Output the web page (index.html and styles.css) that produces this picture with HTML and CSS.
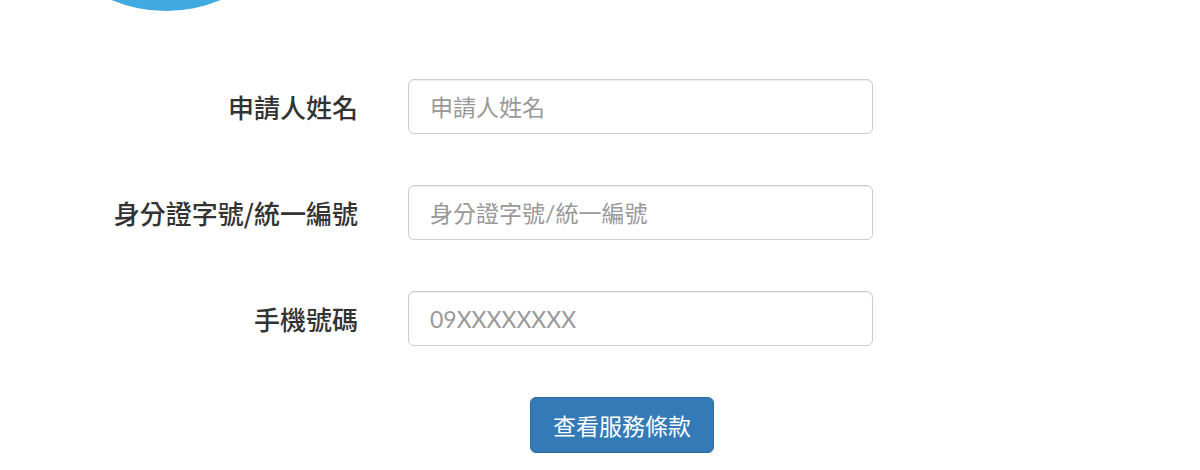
FILE: index.html
```html
<!DOCTYPE html>
<html lang="zh-Hant">
<head>
    <meta charset="UTF-8">
    <meta name="viewport" content="width=device-width, initial-scale=1.0">
    <title>申請資料</title>
    <link rel="stylesheet" href="styles.css">
</head>
<body>
    <div class="logo"></div>

    <form class="apply-form">
        <div class="form-group">
            <label class="form-label" for="name">申請人姓名</label>
            <input class="form-control" id="name" type="text" placeholder="申請人姓名">
        </div>
        <div class="form-group">
            <label class="form-label" for="idno">身分證字號/統一編號</label>
            <input class="form-control" id="idno" type="text" placeholder="身分證字號/統一編號">
        </div>
        <div class="form-group">
            <label class="form-label" for="mobile">手機號碼</label>
            <input class="form-control" id="mobile" type="tel" placeholder="09XXXXXXXX">
        </div>
        <div class="form-actions">
            <button type="button" class="btn-primary">查看服務條款</button>
        </div>
    </form>
</body>
</html>
```

FILE: styles.css
```css
* {
    box-sizing: border-box;
    margin: 0;
    padding: 0;
}

body {
    background: #fff;
    color: #333;
    font-family: 'Lato', 'Noto Sans CJK TC', sans-serif;
    overflow: hidden;
}

.logo {
    width: 286px;
    height: 286px;
    margin: -275px 0 0 23px;
    border-radius: 50%;
    background: #3fa9e0;
}

.apply-form {
    padding-top: 68px;
}

.form-group {
    display: flex;
    align-items: center;
    margin-bottom: 51px;
}

.form-label {
    width: 358px;
    text-align: right;
    font-family: 'Noto Sans CJK TC', sans-serif;
    font-size: 26px;
    font-weight: 500;
    color: #333;
}

.form-control {
    display: block;
    width: 465px;
    height: 55px;
    margin-left: 50px;
    padding: 0 21px;
    border: 1px solid #ccc;
    border-radius: 6px;
    box-shadow: inset 0 1px 1px rgba(0,0,0,0.075);
    font-family: 'Lato', 'Noto Sans CJK TC', sans-serif;
    font-size: 23px;
    color: #555;
    outline: none;
}

.form-control::placeholder {
    color: #999;
}

.form-actions {
    padding-left: 530px;
}

.btn-primary {
    width: 184px;
    height: 56px;
    background: #337ab7;
    border: 1px solid #2e6da4;
    border-radius: 6px;
    color: #fff;
    font-family: 'Noto Sans CJK TC', sans-serif;
    font-size: 23px;
    cursor: pointer;
}
```
